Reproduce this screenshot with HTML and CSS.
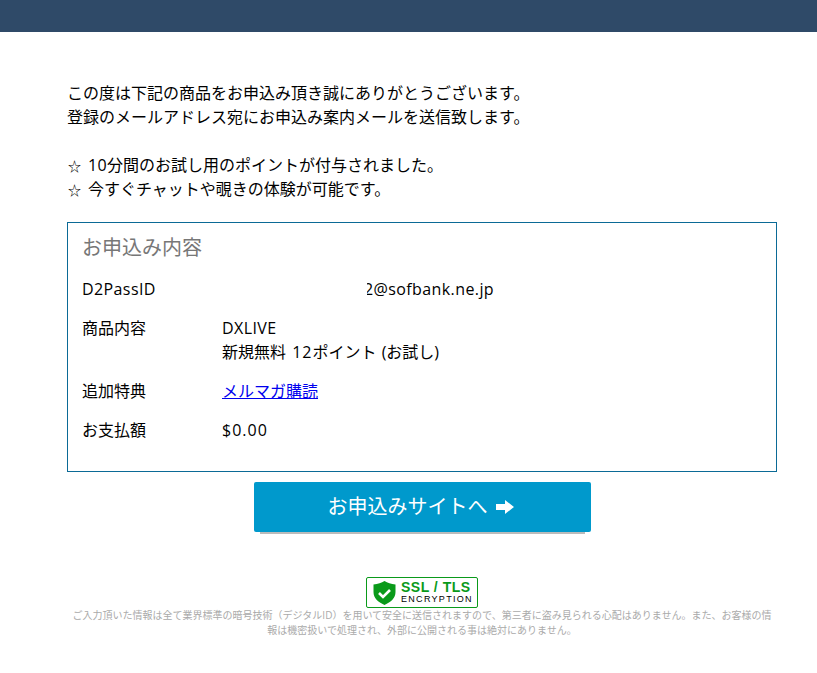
FILE: index.html
```html
<!DOCTYPE html>
<html lang="ja">
<head>
<meta charset="utf-8">
<title>お申込み内容</title>
<link rel="stylesheet" href="styles.css">
</head>
<body>
<header class="topbar"></header>
<main class="wrap">
  <p class="intro">この度は下記の商品をお申込み頂き誠にありがとうございます。<br>登録のメールアドレス宛にお申込み案内メールを送信致します。</p>
  <p class="intro notes"><span class="star">☆</span><span class="lat">10</span>分間のお試し用のポイントが付与されました。<br><span class="star">☆</span>今すぐチャットや覗きの体験が可能です。</p>
  <section class="box">
    <h2 class="box-title">お申込み内容</h2>
    <dl class="rows">
      <div class="row"><dt class="lat">D2PassID</dt><dd class="lat"><span class="mask"></span><span class="masked">2@sofbank.ne.jp</span></dd></div>
      <div class="row"><dt>商品内容</dt><dd><span class="lat">DXLIVE</span><br>新規無料 <span class="lat wide">12</span>ポイント <span class="paren">(お試し)</span></dd></div>
      <div class="row"><dt>追加特典</dt><dd><a href="#">メルマガ購読</a></dd></div>
      <div class="row"><dt>お支払額</dt><dd class="price">$0.00</dd></div>
    </dl>
  </section>
  <div class="action">
    <a class="btn" href="#">お申込みサイトへ
      <svg class="arrow" width="18" height="14" viewBox="0 0 18 14"><path d="M0 4h9V0l9 7-9 7v-4H0z" fill="#fff"/></svg>
    </a>
  </div>
  <div class="badge-row">
    <div class="badge">
      <svg class="shield" width="23" height="24" viewBox="0 0 23 24"><path d="M11.5 0c3 2 6.500 3 11 3.500V11c0 6-4.500 10-11 13C5 21 .5 17 .5 11V3.500C5 3 8.500 2 11.500 0z" fill="#0a9a1a"/><path d="M6 12l4 4 7-7" fill="none" stroke="#fff" stroke-width="2.600"/></svg>
      <div class="badge-text"><span class="ssl">SSL / TLS</span><span class="enc">ENCRYPTION</span></div>
    </div>
  </div>
  <p class="note">ご入力頂いた情報は全て業界標準の暗号技術（デジタルID）を用いて安全に送信されますので、第三者に盗み見られる心配はありません。また、お客様の情報は機密扱いで処理され、外部に公開される事は絶対にありません。</p>
</main>
</body>
</html>
```
FILE: styles.css
```css
* { box-sizing: border-box; }
html, body { margin: 0; padding: 0; }
body {
  background: #fff;
  color: #000;
  font-family: "Open Sans", "Noto Sans CJK JP", sans-serif;
  font-size: 16px;
  line-height: 24px;
}
.topbar { height: 32px; background: #2f4a68; }
.wrap { width: 710px; margin-left: 67px; padding-top: 49px; }
.intro { margin: 0; }
.notes { margin-top: 24px; }
.star { display: inline-block; width: 21px; font-size: 13px; line-height: 16px; padding-left: 1px; }
.lat { letter-spacing: 0.4px; }
.wide { letter-spacing: 1px; margin-left: 2px; }
.paren { margin-left: 1px; }
.box {
  margin-top: 21px;
  height: 250px;
  border: 1px solid #0b6a96;
  padding: 10px 14px 0;
}
.box-title {
  margin: 0 0 14px;
  font-size: 20px;
  font-weight: 400;
  line-height: 30px;
  color: #777;
}
.rows { margin: 0; display: flex; flex-direction: column; gap: 15px; }
.row { display: flex; }
.row dt { width: 140px; flex: none; }
.row dd { margin: 0; }
.price { letter-spacing: 1px; }
.mask { display: inline-block; width: 142px; }
.masked { position: relative; display: inline-block; }
.masked::before {
  content: "";
  position: absolute;
  left: 0;
  top: 0;
  bottom: 0;
  width: 3px;
  background: #fff;
}
.action { margin-top: 10px; display: flex; justify-content: center; }
.btn {
  width: 337px;
  height: 50px;
  display: flex;
  align-items: center;
  justify-content: center;
  gap: 8px;
  padding-right: 3px;
  background: #0099cc;
  border-radius: 2px;
  color: #fff;
  font-size: 20px;
  text-decoration: none;
  box-shadow: 0 8px 0 -6px #bbb;
}
.badge-row { margin-top: 45px; display: flex; justify-content: center; }
.badge {
  width: 112px;
  height: 31px;
  border: 1px solid #0a9a1a;
  border-radius: 2px;
  display: flex;
  align-items: center;
  gap: 5px;
  padding-left: 6px;
}
.badge-text { display: flex; flex-direction: column; font-family: "Liberation Sans", sans-serif; }
.ssl { font-size: 14px; line-height: 14px; font-weight: 700; color: #0a9a1a; letter-spacing: 0.5px; }
.enc { font-size: 9px; line-height: 11px; letter-spacing: 1.3px; color: #000; }
.note {
  margin: 0;
  padding: 0 5px;
  font-size: 10px;
  line-height: 15px;
  text-align: center;
  color: #aaa;
}
```
